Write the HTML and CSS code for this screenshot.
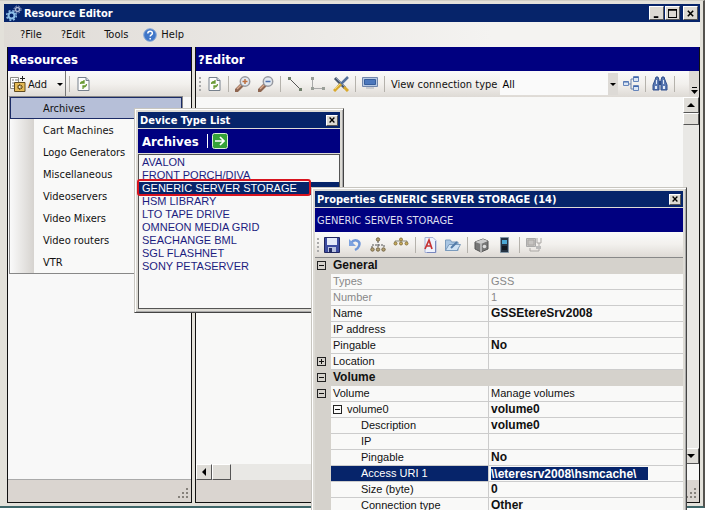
FILE: index.html
```html
<!DOCTYPE html>
<html lang="en">
<head>
<meta charset="utf-8">
<title>Resource Editor</title>
<link rel="stylesheet" href="styles.css">
</head>
<body>
<svg class="defs" aria-hidden="true">
  <defs>
    <symbol id="refresh" viewBox="0 0 16 16">
      <path d="M3 1.500h8l3 3v10H3z" fill="#fdfdfd" stroke="#76808c"/>
      <path d="M11 1.500v3h3" fill="#cfd6de" stroke="#76808c"/>
      <path d="M5.500 8c0-2 2-3 4-2M9 4v3h-3M11.500 8c0 2-2 3.500-4 2.500M8 13v-3h3" fill="none" stroke="#6a9a35" stroke-width="1.300"/>
    </symbol>
    <symbol id="lens" viewBox="0 0 16 16">
      <path d="M7 9l-5.500 5.500" stroke="#8e6550" stroke-width="4" stroke-linecap="round"/>
      <path d="M6 9l-4 4" stroke="#d8a98d" stroke-width="1.500"/>
      <circle cx="10" cy="5.500" r="4.700" fill="#e3e9f0" stroke="#9799a0" stroke-width="1.500"/>
    </symbol>
    <symbol id="close" viewBox="0 0 10 10"><path d="M2 2l6 6M8 2l-6 6" stroke="#000" stroke-width="1.700"/></symbol>
    <symbol id="grip" viewBox="0 0 12 12"><path d="M9 0h2v2H9zM5 4h2v2H5zM9 4h2v2H9zM1 8h2v2H1zM5 8h2v2H5zM9 8h2v2H9z" fill="#85817b"/></symbol>
  </defs>
</svg>
<div class="desktop">
  <main class="window">
    <header class="title">
      <svg class="icon" viewBox="0 0 16 16"><g fill="none" stroke="#8fc0e8"><circle cx="5.500" cy="10.500" r="3" stroke-width="2"/><circle cx="5.500" cy="10.500" r="4.800" stroke-width="1.500" stroke-dasharray="2 1.800"/><circle cx="11.500" cy="4.500" r="2" stroke-width="1.500" stroke="#a7b3d0"/><circle cx="11.500" cy="4.500" r="3.500" stroke="#a7b3d0" stroke-dasharray="1.500 1.300"/></g></svg>
      <h1>Resource Editor</h1>
      <button class="box" aria-label="Minimize"><svg viewBox="0 0 10 10"><path d="M2 8h5v2H2z"/></svg></button>
      <button class="box" aria-label="Maximize"><svg viewBox="0 0 10 10"><path d="M0 0h10v10H0zM1 2v7h8V2z" fill-rule="evenodd"/></svg></button>
      <button class="box apart" aria-label="Close"><svg viewBox="0 0 10 10"><use href="#close"/></svg></button>
    </header>
    <nav class="menubar">
      <button>?File</button><button>?Edit</button><button>Tools</button>
      <button class="help"><svg viewBox="0 0 14 14"><circle cx="7" cy="7" r="6.300" fill="#3f76c8" stroke="#87a8d8"/><path d="M4.800 5.500c0-3 4.600-3 4.600-.3C9.400 7 7.200 6.800 7.200 8.500M7.200 10v1.500" fill="none" stroke="#fff" stroke-width="1.500"/></svg>Help</button>
    </nav>
    <div class="panes">
      <section class="pane resources">
        <h2>Resources</h2>
        <div class="toolbar">
          <button class="add">
            <svg class="icon" viewBox="0 0 16 16"><path d="M.5 1.500h8v11h-8z" fill="#fff" stroke="#8b8b85"/><path d="M2 4h2M5 4h3M2 7h2M2 10h2" stroke="#777"/><path d="M12.500 0v5M10 2.500h5" stroke="#222"/><path d="M4.500 6.500h10.500v9H4.500z" fill="#e8bd58" stroke="#604b20"/><path d="M9.800 8v6M7 11h6M7.700 8.900l4.200 4.200M11.900 8.900l-4.200 4.200" stroke="#4c3a16"/><circle cx="9.800" cy="11" r="1" fill="#fff"/></svg>
            Add <i class="arrow"></i>
          </button>
          <i class="sep"></i>
          <button aria-label="Refresh"><svg class="icon"><use href="#refresh"/></svg></button>
        </div>
        <div class="tree"></div>
        <div class="status"><svg class="grip"><use href="#grip"/></svg></div>
        <ul class="menu">
          <li><button class="on">Archives</button></li>
          <li><button>Cart Machines</button></li>
          <li><button>Logo Generators</button></li>
          <li><button>Miscellaneous</button></li>
          <li><button>Videoservers</button></li>
          <li><button>Video Mixers</button></li>
          <li><button>Video routers</button></li>
          <li><button>VTR</button></li>
        </ul>
      </section>
      <section class="pane editor">
        <h2>?Editor</h2>
        <div class="toolbar">
          <i class="handle"></i>
          <button aria-label="Refresh"><svg class="icon"><use href="#refresh"/></svg></button>
          <i class="sep"></i>
          <button aria-label="Zoom in"><svg class="icon" viewBox="0 0 16 16"><use href="#lens"/><path d="M7.500 5.500h5M10 3v5" stroke="#bd7040" stroke-width="1.500"/></svg></button>
          <button aria-label="Zoom out"><svg class="icon" viewBox="0 0 16 16"><use href="#lens"/><path d="M7.500 5.500h5" stroke="#4e70ad" stroke-width="1.500"/></svg></button>
          <i class="sep"></i>
          <button aria-label="Line"><svg class="icon" viewBox="0 0 16 16"><path d="M2 2l11 11" stroke="#555"/><path d="M1 1h3v3H1zM12 12h3v3h-3z" fill="#71806d"/></svg></button>
          <button aria-label="Corner line"><svg class="icon" viewBox="0 0 16 16"><path d="M2.500 2v10.500H14" fill="none" stroke="#aaa"/><path d="M1 1h3v3H1zM1 11h3v3H1zM12 11h3v3h-3z" fill="#9a9f98"/></svg></button>
          <button aria-label="Draw"><svg class="icon" viewBox="0 0 16 16"><path d="M2 2l10 10" stroke="#47566b" stroke-width="3"/><path d="M3 2l9 9" stroke="#8b9bb8"/><path d="M11 11l4 4" stroke="#d9a92c" stroke-width="3"/><path d="M15 1L5 11" stroke="#55719b" stroke-width="2.500"/><path d="M8 8L1 15" stroke="#d9a92c" stroke-width="3"/><path d="M7 8l-5 5" stroke="#f3d778"/></svg></button>
          <i class="sep"></i>
          <button aria-label="Display"><svg class="icon" viewBox="0 0 16 16"><path d="M.5 1.500h15v9H.5z" fill="#b8cae4" stroke="#7186ab"/><path d="M2.500 3.500h11v5h-11z" fill="#4c78bd" stroke="#365d9c"/><path d="M4 12h8" stroke="#a9b1bc"/></svg></button>
          <i class="sep"></i>
          <label for="conn">View connection type</label>
          <span class="combo"><select id="conn"><option>All</option></select><i class="arrow"></i></span>
          <button aria-label="Connections"><svg class="icon" viewBox="0 0 16 16"><path d="M5 8h3M8 3v10M8 3h3M8 13h3" fill="none" stroke="#6a82aa"/><path d="M.5 5.500h5v4h-5zM10.500.5h5v5h-5zM10.500 9.500h5v5h-5z" fill="#dbe6f5" stroke="#6685ba"/><path d="M.5 6h5M10.500 1.500h5M10.500 10.500h5" stroke="#4269ac"/></svg></button>
          <i class="sep"></i>
          <button aria-label="Find"><svg class="icon" viewBox="0 0 16 16"><path d="M3 4l1-3h2l1 3v10H1V9zM9 4l1-3h2l1 3 2 5v5H9z" fill="#5b79b3" stroke="#2f4f8d"/><path d="M7 5h2v4H7z" fill="#304f8b"/><path d="M3 10h2v3H3zM11 10h2v3h-2zM4 4h1v4H4zM11 4h1v4h-1z" fill="#e1eaf8"/></svg></button>
          <i class="sep"></i>
          <button class="overflow" aria-label="More"><svg viewBox="0 0 7 7"><path d="M1 0h5v1H1zM0 3h7L3.500 7z"/></svg></button>
        </div>
        <div class="canvas">
          <div class="paper"></div>
          <div class="vbar"><button class="key up" aria-label="Up"></button><i class="thumb"></i><i class="fill"></i><button class="key down" aria-label="Down"></button></div>
          <div class="hbar"><button class="key left" aria-label="Left"></button><i class="thumb"></i></div>
        </div>
        <div class="status"><svg class="grip"><use href="#grip"/></svg></div>
      </section>
    </div>
  </main>

  <section class="float devices">
    <header class="title"><h1>Device Type List</h1><button class="box small" aria-label="Close"><svg><use href="#close"/></svg></button></header>
    <h2>Archives <i></i><button aria-label="Go"><svg viewBox="0 0 16 16"><rect x=".5" y=".5" width="15" height="15" rx="2" fill="#35a338" stroke="#d8efd5"/><path d="M3 8h9M8 4l4 4-4 4" fill="none" stroke="#fff" stroke-width="1.700"/></svg></button></h2>
    <ul class="list">
      <li>AVALON</li><li>FRONT PORCH/DIVA</li><li class="on">GENERIC SERVER STORAGE</li><li>HSM LIBRARY</li><li>LTO TAPE DRIVE</li><li>OMNEON MEDIA GRID</li><li>SEACHANGE BML</li><li>SGL FLASHNET</li><li>SONY PETASERVER</li>
    </ul>
    <div class="marker"></div>
  </section>

  <section class="float props">
    <header class="title"><h1>Properties GENERIC SERVER STORAGE (14)</h1><button class="box small" aria-label="Close"><svg><use href="#close"/></svg></button></header>
    <h2>GENERIC SERVER STORAGE</h2>
    <div class="toolbar">
      <i class="handle"></i>
      <button aria-label="Save"><svg class="icon" viewBox="0 0 16 16"><path d="M.5.5h15v15H.5z" fill="#3d4ca0" stroke="#20265f"/><path d="M3 1h10v7H3z" fill="#e4e9f8"/><path d="M4 10h8v5H4z" fill="#b7c0df"/><path d="M5 11h3v4H5z" fill="#222b66"/></svg></button>
      <button aria-label="Undo"><svg class="icon" viewBox="0 0 16 16"><path d="M4 6c4-5 10-2 8 3-.6 2-2 3-4 4" fill="none" stroke="#6f96d8" stroke-width="2.500"/><path d="M2 2v7h7z" fill="#7da2df"/></svg></button>
      <button aria-label="Expand all"><svg class="icon" viewBox="0 0 16 16"><path d="M8 4v4M2 11V8h12v3M8 8v3" fill="none" stroke="#555" stroke-dasharray="2 1"/><g fill="#b3a071" stroke="#776848"><circle cx="8" cy="2.500" r="1.700"/><circle cx="2.500" cy="12.500" r="1.700"/><circle cx="8" cy="12.500" r="1.700"/><circle cx="13.500" cy="12.500" r="1.700"/></g></svg></button>
      <button aria-label="Collapse all"><svg class="icon" viewBox="0 0 16 16"><path d="M2 6V4h12v2" fill="none" stroke="#887"/><g fill="#c9ad57" stroke="#8b7644"><circle cx="8" cy="2.500" r="1.500"/><circle cx="2.500" cy="6.500" r="1.500"/><circle cx="8" cy="6.500" r="1.500"/><circle cx="13.500" cy="6.500" r="1.500"/></g></svg></button>
      <i class="sep"></i>
      <button aria-label="Font"><svg class="icon" viewBox="0 0 16 16"><path d="M3 .5h8l3 3v12H3z" fill="#eef2fc" stroke="#a8b3d6"/><path d="M13.500 4v11.500H5" fill="none" stroke="#7887bd"/><path d="M3 12L7 3l3 9M4.500 9h5" fill="none" stroke="#c63232" stroke-width="1.700"/></svg></button>
      <button aria-label="Open"><svg class="icon" viewBox="0 0 16 16"><path d="M.5 13.500V3h5l1 2H13v8.500z" fill="#a9c6e3" stroke="#7a9bbd"/><path d="M.5 13.500L4 7.500h11.500L12 13.500z" fill="#d0e3f4" stroke="#7a9bbd"/><path d="M6 11l6-6" stroke="#527ba8" stroke-width="2"/></svg></button>
      <i class="sep"></i>
      <button aria-label="Device"><svg class="icon" viewBox="0 0 16 16"><path d="M1 5l8-3 5 2v8l-7 3-6-3z" fill="#777" stroke="#555"/><path d="M1 5l6 2 7-3-5-2z" fill="#ccc"/><path d="M7 7v8" stroke="#eee"/><circle cx="10.500" cy="9.500" r="1.800" fill="#ddd"/></svg></button>
      <button aria-label="Unit"><svg class="icon" viewBox="0 0 16 16"><path d="M3.500.5h8v15h-8z" fill="#263444" stroke="#8296a6"/><path d="M5 3h5v4H5z" fill="#4aa7d4"/><path d="M5 9h5v4H5z" fill="#101820"/></svg></button>
      <i class="sep"></i>
      <button aria-label="Network"><svg class="icon" viewBox="0 0 16 16"><path d="M.5 1.500h9v8h-9z" fill="#c7c5c3" stroke="#aaa"/><path d="M2 3h6v5H2zM11 1v5h4V1M13 6v3M4 11v3h9v-3" fill="none" stroke="#aaa7a4"/><path d="M10 9h5v3h-5z" fill="#bbb"/></svg></button>
    </div>
    <table>
      <colgroup><col class="gutter"><col class="name"><col></colgroup>
      <tbody>
      <tr class="cat"><td><button class="toggle" aria-label="Collapse"></button></td><th colspan="2">General</th></tr>
      <tr class="dim"><td></td><th>Types</th><td>GSS</td></tr>
      <tr class="dim"><td></td><th>Number</th><td>1</td></tr>
      <tr><td></td><th>Name</th><td><b>GSSEtereSrv2008</b></td></tr>
      <tr><td></td><th>IP address</th><td></td></tr>
      <tr><td></td><th>Pingable</th><td><b>No</b></td></tr>
      <tr><td><button class="toggle plus" aria-label="Expand"></button></td><th>Location</th><td></td></tr>
      <tr class="cat"><td><button class="toggle" aria-label="Collapse"></button></td><th colspan="2">Volume</th></tr>
      <tr><td><button class="toggle" aria-label="Collapse"></button></td><th>Volume</th><td>Manage volumes</td></tr>
      <tr><td></td><th><span class="branch"><button class="toggle" aria-label="Collapse"></button>volume0</span></th><td><b>volume0</b></td></tr>
      <tr class="leaf"><td></td><th>Description</th><td><b>volume0</b></td></tr>
      <tr class="leaf"><td></td><th>IP</th><td></td></tr>
      <tr class="leaf"><td></td><th>Pingable</th><td><b>No</b></td></tr>
      <tr class="leaf on"><td></td><th><label for="uri">Access URI 1</label></th><td><input id="uri" value="\\eteresrv2008\hsmcache\"></td></tr>
      <tr class="leaf"><td></td><th>Size (byte)</th><td><b>0</b></td></tr>
      <tr class="leaf"><td></td><th>Connection type</th><td><b>Other</b></td></tr>
      </tbody>
    </table>
  </section>
</div>
</body>
</html>
```
FILE: styles.css
```css
* { box-sizing: border-box; }
body { margin: 0; background: #fff; color: #111; font: 11px "DejaVu Sans Condensed", "DejaVu Sans", sans-serif; }
h1, h2, ul { margin: 0; padding: 0; list-style: none; }
button { padding: 0; border: 0; background: none; color: inherit; font: inherit; display: flex; align-items: center; }
svg { display: block; }
.defs { position: absolute; width: 0; height: 0; }
.desktop { position: relative; height: 100vh; overflow: hidden; padding: 0 2px 2px 0; }
.window { height: 100%; display: flex; flex-direction: column; padding: 3px 3px 3px 4px; background: #e3e1da; border-right: 2px solid #55534f; border-bottom: 2px solid #3f676a; border-top: 1px solid #d0cec6; }
.icon { width: 16px; height: 16px; flex: none; }

.title { display: flex; align-items: center; height: 18px; flex: none; padding: 0 2px; background: #06246a; color: #fff; }
.title h1 { flex: 1; font-size: 11px; font-weight: bold; white-space: nowrap; }
.window > .title h1 { padding-left: 2px; }
.box { width: 15px; height: 14px; justify-content: center; background: #dcd9d2; border: 1px solid; border-color: #fff #555 #555 #fff; margin-left: 1px; }
.box svg { width: 9px; height: 9px; }
.apart { margin-left: 3px; }
.small { width: 12px; height: 11px; }
.small svg { width: 8px; height: 8px; }

.menubar { display: flex; align-items: center; gap: 19px; height: 25px; flex: none; padding-left: 16px; background: linear-gradient(90deg, #dfdbd6, #f4f3f1 70%); }
.help { gap: 4px; margin-left: -4px; }
.help svg { width: 14px; height: 14px; }

.panes { flex: 1; min-height: 0; display: flex; gap: 3px; padding-left: 3px; }
.pane { position: relative; display: flex; flex-direction: column; border: 1px solid #111; border-top: 0; background: #f8f8f7; }
.resources { width: 185px; flex: none; }
.editor { flex: 1; min-width: 0; }
h2 { height: 24px; flex: none; display: flex; align-items: center; background: #000080; color: #fff; font-size: 13px; font-weight: bold; padding-left: 2px; }
.toolbar { display: flex; align-items: center; height: 26px; flex: none; background: linear-gradient(#fafafa, #f2f0ed 50%, #dedad5); }
.editor .toolbar { gap: 7px; padding-left: 3px; }
.sep { width: 1px; height: 16px; background: #b5b2ac; margin: 0 -1px; flex: none; }
.handle { width: 2px; height: 14px; background: repeating-linear-gradient(#aaa 0 2px, transparent 2px 4px); margin-right: -2px; flex: none; }
.arrow { border: 3px solid transparent; border-top-color: #000; border-bottom: 0; }
.add { gap: 2px; height: 26px; padding: 0 2px; border-right: 1px solid #777; }
.add .arrow { margin-left: 8px; }
.resources .sep { margin: 0 5px 0 3px; }
.tree { flex: 1; background: #f8f8f8; border-bottom: 1px solid #aaa; }
.status { height: 22px; flex: none; display: flex; align-items: flex-end; justify-content: flex-end; padding: 2px; background: #dad5d0; }
.grip { width: 12px; height: 12px; }
.menu { position: absolute; top: 49px; left: 1px; width: 174px; background: linear-gradient(90deg, #fafafa, #d6d3cf 24px, #f9f9f8 24px); border: 1px solid #888; }
.menu button { width: 100%; height: 22px; padding-left: 33px; }
.menu .on { background: #b6bfd8; outline: 1px solid #1b2b66; outline-offset: -1px; }
.editor label { white-space: nowrap; }
.combo { position: relative; flex: 1; display: flex; margin: 0 -2px 0 -4px; }
select { width: 100%; height: 22px; appearance: none; border: 0; border-radius: 0; padding: 0 2px; background: linear-gradient(#dddad6, #dddad6) right / 10px 100% no-repeat #fafafa; font: inherit; }
.combo .arrow { position: absolute; right: 2px; top: 10px; pointer-events: none; }
.overflow { width: 10px; height: 26px; margin-left: 8px; background: #dedad6; justify-content: center; align-items: flex-end; padding-bottom: 3px; }
.overflow svg { width: 7px; height: 7px; }
.canvas { flex: 1; min-height: 0; display: grid; grid-template: 1fr 16px / 1fr 16px; }
.vbar, .hbar { display: flex; background: #e9e8e5; }
.vbar { flex-direction: column; }
.fill { flex: 1; }
.key, .thumb { width: 16px; height: 16px; flex: none; justify-content: center; background: #dfddd8; border: 1px solid; border-color: #fff #555 #555 #fff; }
.vbar .thumb { height: 12px; }
.hbar .thumb { width: 19px; }
.key::before { content: ""; border: 4px solid transparent; }
.up::before { border-bottom-color: #000; border-top: 0; }
.down::before { border-top-color: #000; border-bottom: 0; }
.left::before { border-right-color: #000; border-left: 0; }

.float { position: absolute; background: #dddbd5; border: 1px solid; border-color: #c8c6c0 #444 #444 #c8c6c0; box-shadow: inset 1px 1px #fff, inset -1px -1px #aaa; }
.float .title { height: 16px; }
.devices { left: 134px; top: 108px; width: 210px; height: 205px; padding: 3px; display: flex; flex-direction: column; }
.devices h2 { padding-left: 4px; height: 25px; border-top: 1px solid #dddbd5; }
.devices h2 i { width: 1px; height: 14px; background: #fff; margin: 0 4px 0 8px; }
.devices h2 svg { width: 16px; height: 16px; }
.list { flex: 1; margin-top: 1px; padding: 0 0 0 3px; background: #f8f8f8; border: 1px solid #555; color: #1c1c80; font: 11px/13px "Liberation Sans", sans-serif; white-space: nowrap; }
.list .on { background: #06246a; color: #fff; margin-left: -3px; padding-left: 3px; }
.list { padding-top: 1px; }
.marker { position: absolute; left: 2px; top: 70px; width: 174px; height: 17px; border: 2px solid #d8141f; border-radius: 3px; }

.props { left: 311px; top: 187px; width: 376px; height: 340px; padding: 3px 3px 0; }
.props h2 { margin-top: 1px; font-size: 11px; font-weight: normal; color: #dde; }
.props .toolbar { height: 26px; padding-left: 2px; gap: 7px; border-bottom: 1px solid #888; }
table { width: 100%; table-layout: fixed; border-collapse: separate; border-spacing: 0; background: #f9f9f8; font: 11px/15px "Liberation Sans", sans-serif; }
.gutter { width: 16px; }
.name { width: 157px; }
td, th { height: 16px; padding: 0 2px; text-align: left; font-weight: normal; border-bottom: 1px solid #ccc; white-space: nowrap; overflow: hidden; }
td:first-child { padding: 0 0 0 2px; background: #d5d2cc; border-color: #d5d2cc; }
td:last-child { border-left: 1px solid #ccc; }
b, .cat th { display: inline; font-size: 12px; font-weight: bold; }
.cat th { display: table-cell; background: #d5d2cc; border-color: #d5d2cc; }
.dim { color: #888; }
.toggle { width: 9px; height: 9px; flex: none; border: 1px solid #222; background: linear-gradient(#111, #111) center / 5px 1px no-repeat; }
.plus { background: linear-gradient(#111, #111) center / 5px 1px no-repeat, linear-gradient(#111, #111) center / 1px 5px no-repeat; }
.branch { display: flex; align-items: center; gap: 5px; }
.leaf th { padding-left: 30px; }
.on th { background: #06246a; color: #fff; }
input { display: block; width: 157px; height: 13px; padding: 0; border: 0; background: #06246a; color: #fff; font: bold 12px "Liberation Sans", sans-serif; }
```
